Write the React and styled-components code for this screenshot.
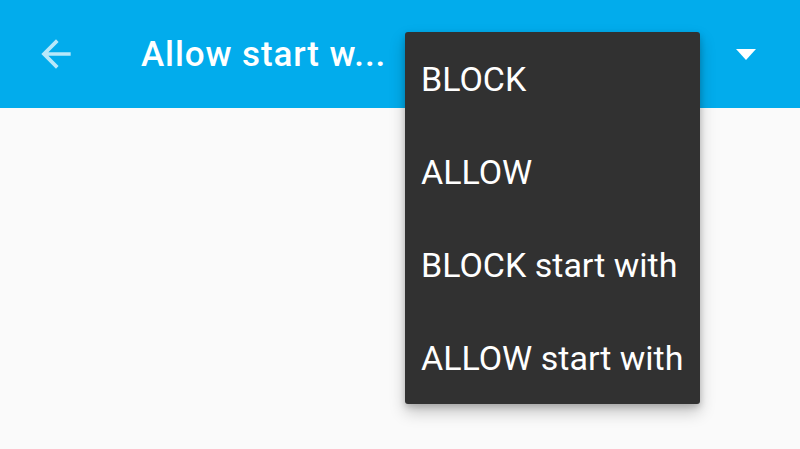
import React from 'react';
import styled, { createGlobalStyle } from 'styled-components';

const GlobalStyle = createGlobalStyle`
  html, body {
    margin: 0;
    padding: 0;
    background: #FAFAFA;
  }
  #root {
    width: 800px;
    height: 449px;
    overflow: hidden;
  }
`

const Screen = styled.div`
  position: relative;
  width: 800px;
  height: 449px;
  background: #FAFAFA;
  font-family: Roboto, 'Noto Sans', sans-serif;
`

const Toolbar = styled.header`
  display: flex;
  align-items: center;
  height: 108px;
  background: #02ACEC;
  color: #FFFFFF;
`

const BackButton = styled.div`
  display: flex;
  align-items: center;
  justify-content: center;
  width: 112px;
  height: 108px;
  margin-right: 29px;
`

const Title = styled.h1`
  flex: 1;
  margin: 0;
  font-size: 35px;
  font-weight: 500;
  letter-spacing: 0.9px;
  white-space: nowrap;
`

const Caret = styled.div`
  display: flex;
  align-items: center;
  justify-content: center;
  width: 90px;
  height: 108px;
  margin-right: 9px;
`

const Menu = styled.ul`
  position: absolute;
  top: 32px;
  left: 405px;
  width: 295px;
  margin: 0;
  padding: 0;
  list-style: none;
  background: #313131;
  border-radius: 3px;
  box-shadow: 0 8px 16px rgba(0, 0, 0, 0.22), 0 3px 6px rgba(0, 0, 0, 0.18);
`

const MenuItem = styled.li`
  display: flex;
  align-items: center;
  height: 93px;
  padding-left: 16px;
  color: #FFFFFF;
  font-size: 34px;
  font-weight: 400;
  white-space: nowrap;
`

const options = ['BLOCK', 'ALLOW', 'BLOCK start with', 'ALLOW start with']

export default function App() {
  return (
    <Screen>
      <GlobalStyle />
      <Toolbar>
        <BackButton>
          <svg width="44" height="44" viewBox="0 0 24 24">
            <path
              d="M20 11H7.83l5.59-5.59L12 4l-8 8 8 8 1.41-1.41L7.83 13H20v-2z"
              fill="rgba(255,255,255,0.72)"
            />
          </svg>
        </BackButton>
        <Title>Allow start w...</Title>
        <Caret>
          <svg width="20" height="11" viewBox="0 0 20 11">
            <path d="M0 0h20L10 11z" fill="#FFFFFF" />
          </svg>
        </Caret>
      </Toolbar>
      <Menu>
        {options.map((o) => (
          <MenuItem key={o}>{o}</MenuItem>
        ))}
      </Menu>
    </Screen>
  );
}
